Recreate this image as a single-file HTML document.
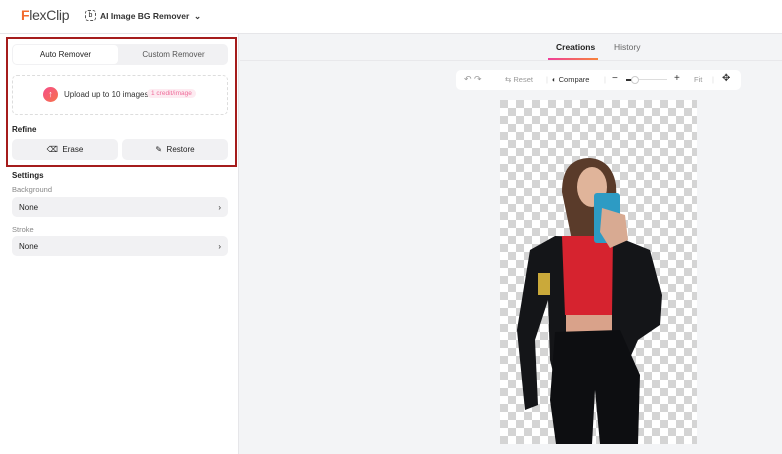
<!DOCTYPE html>
<html><head><meta charset="utf-8"><style>
*{box-sizing:border-box;margin:0;padding:0}
body{width:782px;height:454px;overflow:hidden;font-family:"Liberation Sans",sans-serif;background:#f3f4f6;position:relative;color:#222}
.hdr{position:absolute;left:0;top:0;width:782px;height:34px;background:#fff;border-bottom:1px solid #e6e6e9}
.left{position:absolute;left:0;top:34px;width:239px;height:420px;background:#fff;border-right:1px solid #e6e6e9}
.abs{position:absolute}
.btn{position:absolute;background:#f1f1f3;border-radius:5px;font-size:8px;display:flex;align-items:center}
</style></head><body>
<div class="hdr">
  <div class="abs" style="left:21px;top:7px;font-size:14px;color:#444;letter-spacing:-0.3px"><span style="color:#f26a2d;font-weight:bold">F</span>lexClip</div>
  <div class="abs" style="left:85px;top:10px;width:11px;height:11px;border:1px dashed #555;border-radius:3px;font-size:7px;text-align:center;line-height:9px">b</div>
  <div class="abs" style="left:100px;top:11px;font-size:8.5px;font-weight:bold;color:#333">AI Image BG Remover&nbsp;&nbsp;⌄</div>
</div>
<div class="left">
  <div class="abs" style="left:6px;top:3px;width:231px;height:130px;border:2px solid #a51c1c"></div>
  <div class="abs" style="left:12px;top:10px;width:216px;height:21px;background:#f1f1f3;border-radius:5px"></div>
  <div class="abs" style="left:13px;top:11px;width:105px;height:19px;background:#fff;border-radius:4px;font-size:8px;text-align:center;line-height:19px;color:#222">Auto Remover</div>
  <div class="abs" style="left:120px;top:11px;width:107px;height:19px;font-size:8px;text-align:center;line-height:19px;color:#555">Custom Remover</div>
  <div class="abs" style="left:12px;top:41px;width:216px;height:40px;border:1px dashed #ddd;border-radius:5px"></div>
  <div class="abs" style="left:43px;top:53px;width:15px;height:15px;border-radius:50%;background:linear-gradient(135deg,#f54d8a,#f7734a);color:#fff;font-size:9px;text-align:center;line-height:15px">↑</div>
  <div class="abs" style="left:64px;top:56px;font-size:8px;color:#333">Upload up to 10 images</div>
  <div class="abs" style="left:147px;top:55px;padding:1px 4px;background:#fdebf1;border-radius:6px;font-size:6.5px;color:#ef6c9a;white-space:nowrap">1 credit/image</div>
  <div class="abs" style="left:12px;top:91px;font-size:8px;font-weight:bold">Refine</div>
  <div class="btn" style="left:12px;top:105px;width:106px;height:21px;justify-content:center">⌫&nbsp;&nbsp;Erase</div>
  <div class="btn" style="left:122px;top:105px;width:106px;height:21px;justify-content:center">✎&nbsp;&nbsp;Restore</div>
  <div class="abs" style="left:12px;top:137px;font-size:8px;font-weight:bold">Settings</div>
  <div class="abs" style="left:12px;top:151px;font-size:7.5px;color:#888">Background</div>
  <div class="btn" style="left:12px;top:163px;width:216px;height:20px;padding:0 7px;justify-content:space-between"><span>None</span><span>›</span></div>
  <div class="abs" style="left:12px;top:191px;font-size:7.5px;color:#888">Stroke</div>
  <div class="btn" style="left:12px;top:202px;width:216px;height:20px;padding:0 7px;justify-content:space-between"><span>None</span><span>›</span></div>
</div>
<div class="abs" style="left:240px;top:34px;width:542px;height:27px;border-bottom:1px solid #e8e8eb"></div>
<div class="abs" style="left:556px;top:42px;font-size:8.5px;font-weight:bold;color:#222">Creations</div>
<div class="abs" style="left:548px;top:58px;width:50px;height:2px;background:linear-gradient(90deg,#ef3e9a,#f7833a)"></div>
<div class="abs" style="left:614px;top:42px;font-size:8.5px;color:#666">History</div>
<div class="abs" style="left:456px;top:70px;width:285px;height:20px;background:#fff;border-radius:5px;font-size:7.5px;color:#999">
  <span class="abs" style="left:8px;top:4px;font-size:9px">↶ ↷</span>
  <span class="abs" style="left:49px;top:5px">⇆ Reset</span>
  <span class="abs" style="left:90px;top:5px;color:#ddd">|</span>
  <span class="abs" style="left:96px;top:5px;color:#333">◐ Compare</span>
  <span class="abs" style="left:148px;top:5px;color:#ddd">|</span>
  <span class="abs" style="left:156px;top:3px;color:#333;font-size:10px">−</span>
  <span class="abs" style="left:171px;top:9px;width:40px;height:1px;background:#ddd"></span>
  <span class="abs" style="left:170px;top:9px;width:6px;height:1.5px;background:#333"></span>
  <span class="abs" style="left:175px;top:6px;width:8px;height:8px;border-radius:50%;background:#fff;border:1px solid #ccc"></span>
  <span class="abs" style="left:218px;top:3px;color:#333;font-size:10px">+</span>
  <span class="abs" style="left:238px;top:5px">Fit</span>
  <span class="abs" style="left:256px;top:5px;color:#ddd">|</span>
  <span class="abs" style="left:266px;top:3px;color:#333;font-size:10px">✥</span>
</div>
<svg class="abs" style="left:500px;top:100px" width="197" height="344">
<defs><pattern id="c" width="16" height="16" patternUnits="userSpaceOnUse"><rect width="16" height="16" fill="#fff"/><rect width="8" height="8" fill="#d4d4d4"/><rect x="8" y="8" width="8" height="8" fill="#d4d4d4"/></pattern></defs>
<rect width="197" height="344" fill="url(#c)"/>
<path d="M62 92 Q62 58 90 58 Q112 60 116 85 L118 140 L72 140 Z" fill="#5a3b2a"/>
<ellipse cx="92" cy="87" rx="15" ry="20" fill="#e0b49a"/>
<path d="M55 136 L30 150 L17 230 L25 310 L38 305 L35 240 L48 200 L50 260 L55 280 L120 280 L138 240 L160 225 L162 195 L150 150 L120 138 Z" fill="#141518"/>
<path d="M62 136 L113 136 L112 215 L65 215 Z" fill="#d6232f"/>
<path d="M66 215 L112 215 L112 235 L66 235 Z" fill="#d9a28a"/>
<path d="M55 232 L120 230 L140 275 L138 344 L100 344 L95 290 L92 344 L56 344 L50 300 Z" fill="#0d0e11"/>
<rect x="94" y="93" width="26" height="50" rx="3" fill="#2d9bc4"/>
<path d="M102 108 L125 115 L128 140 L110 148 L100 132 Z" fill="#d8aa92"/>
<rect x="38" y="173" width="12" height="22" fill="#caa93a"/>
</svg>
</body></html>
